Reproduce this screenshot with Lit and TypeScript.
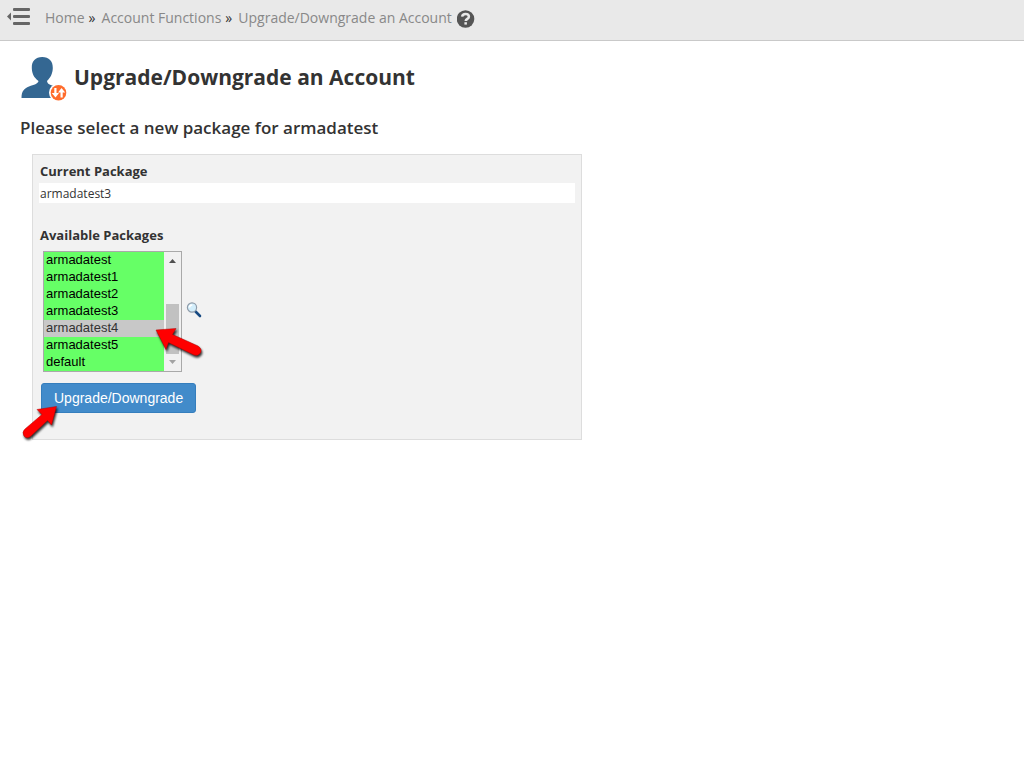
import { LitElement, html, css } from "lit";
import { customElement, state } from "lit/decorators.js";

@customElement("app-root")
export class AppRoot extends LitElement {
  static styles = css`
    :host {
      display: block;
      font-family: "Open Sans", sans-serif;
      font-size: 13px;
      line-height: 20px;
      color: #333;
    }
    * {
      box-sizing: border-box;
    }
    svg {
      display: block;
      flex: none;
    }
    .topbar {
      display: flex;
      align-items: center;
      height: 41px;
      padding: 0 7px 5px;
      background: #e9e9e9;
      border-bottom: 1px solid #c9c9c9;
    }
    .icon-button {
      padding: 0 0 3px;
      border: 0;
      background: none;
      cursor: pointer;
    }
    .crumbs {
      display: flex;
      align-items: center;
      gap: 5px;
      margin-left: 15px;
      font-size: 14px;
    }
    .crumbs a {
      color: #888;
      text-decoration: none;
    }
    .sep {
      margin-right: 1px;
      margin-left: -1px;
    }
    main {
      padding: 14px 20px;
    }
    .heading {
      display: flex;
      align-items: center;
      gap: 6px;
    }
    h1 {
      margin: 0 0 4px;
      font-size: 21px;
      line-height: 28px;
      font-weight: 700;
    }
    h2 {
      margin: 16px 0;
      font-size: 17px;
      line-height: 20px;
      font-weight: 600;
    }
    .panel {
      max-width: 550px;
      margin-left: 12px;
      padding: 6px 6px 26px;
      background: #f2f2f2;
      border: 1px solid #ddd;
    }
    .label {
      display: block;
      padding: 0 1px;
      font-size: 13px;
      font-weight: 700;
    }
    .current {
      margin: 2px 0 22px;
      padding: 2px 1px 0;
      font-size: 12px;
      line-height: 18px;
      background: #fff;
    }
    .picker {
      display: flex;
      align-items: center;
      gap: 4px;
      margin: 6px 0 11px 4px;
    }
    .listbox {
      position: relative;
      display: flex;
      border: 1px solid #a9a9a9;
    }
    select {
      width: 120px;
      height: 119px;
      padding: 0;
      border: 0;
      border-radius: 0;
      outline: 0;
      overflow: hidden;
      background: #6f6;
      font: 13px/17px "Liberation Sans", Arial, sans-serif;
      color: #000;
    }
    option {
      height: 17px;
      min-height: 17px;
      padding: 0 2px;
      line-height: 15px;
    }
    option:checked {
      background: #c8c8c8 linear-gradient(#c8c8c8, #c8c8c8);
      color: #333;
    }
    .submit {
      position: relative;
      display: flex;
      width: max-content;
      margin-left: 2px;
    }
    .primary {
      height: 30px;
      padding: 0 12px;
      border: 1px solid #357ebd;
      border-radius: 3px;
      background: #428bca;
      color: #fff;
      font: 14px/20px "Liberation Sans", Arial, sans-serif;
      cursor: pointer;
    }
    .pointer {
      position: absolute;
      pointer-events: none;
      filter: drop-shadow(1px 2px 1px rgba(0, 0, 0, 0.8));
    }
    .to-option {
      left: 111px;
      top: 75px;
    }
    .to-submit {
      left: -20px;
      top: 21px;
    }
  `;

  @state() private selected = "armadatest4";

  private packages = [
    "armadatest",
    "armadatest1",
    "armadatest2",
    "armadatest3",
    "armadatest4",
    "armadatest5",
    "default",
  ];

  private pick(e: Event) {
    this.selected = (e.target as HTMLSelectElement).value;
  }

  render() {
    return html`
      <header class="topbar">
        <button class="icon-button" aria-label="Collapse menu">
          <svg width="23" height="18" viewBox="0 0 23 18" fill="#666">
            <path d="M0 9.500L4 5.500V13.500Z" />
            <rect x="6" y="1" width="17" height="3" rx="1" />
            <rect x="6" y="8" width="17" height="3" rx="1" />
            <rect x="6" y="15" width="17" height="3" rx="1" />
          </svg>
        </button>
        <nav class="crumbs" aria-label="Breadcrumb">
          <a href="#">Home</a><span class="sep">»</span>
          <a href="#">Account Functions</a><span class="sep">»</span>
          <a href="#">Upgrade/Downgrade an Account</a>
          <a href="#" aria-label="Help">
            <svg width="18" height="20" viewBox="0 -2 18 20">
              <circle cx="8.500" cy="9" r="8.8" fill="#555" />
              <path
                d="M5.1 6.6C5.4 4.9 6.7 4 8.5 4C10.5 4 11.9 5.1 11.9 6.7C11.9 8.8 8.7 8.9 8.7 11"
                fill="none"
                stroke="#e9e9e9"
                stroke-width="2.5"
              />
              <rect x="7.4" y="12.2" width="2.5" height="2.4" fill="#e9e9e9" />
            </svg>
          </a>
        </nav>
      </header>
      <main>
        <div class="heading">
          <svg width="48" height="47" viewBox="0 0 48 47">
            <path
              d="M1.500 43C1.600 36 4 33.500 9 31.500C14 29.500 18 29 18.500 26C14 22.500 12 19 11.800 13C11.600 6 15.500 2 22.200 2C29 2 33 6 32.800 13C32.600 19 30.500 22.500 27 26C27.500 29 30 30 34 31L34 43Z"
              fill="#346792"
            />
            <circle cx="38.500" cy="37.800" r="9.500" fill="#fff" />
            <circle cx="38.500" cy="37.800" r="7.800" fill="#ff6c2c" />
            <path
              d="M34.300 33H36.500V38H39L35.500 42.500L31.800 38H34.300ZM40.500 42.500H42.700V37.500H45.200L41.500 33L38 37.500H40.500Z"
              fill="#fff"
            />
          </svg>
          <h1>Upgrade/Downgrade an Account</h1>
        </div>
        <h2>Please select a new package for armadatest</h2>
        <form class="panel" @submit=${(e: Event) => e.preventDefault()}>
          <span class="label">Current Package</span>
          <div class="current">armadatest3</div>
          <label class="label" for="packages">Available Packages</label>
          <div class="picker">
            <div class="listbox">
              <select id="packages" size="7" @change=${this.pick}>
                ${this.packages.map(
                  (name) => html`<option value=${name} ?selected=${name === this.selected}>${name}</option>`
                )}
              </select>
              <svg width="17" height="119" viewBox="0 0 17 119" aria-hidden="true">
                <rect width="17" height="119" fill="#f1f1f1" />
                <rect x="2" y="52" width="13" height="50" fill="#c1c1c1" />
                <path d="M5 11L8.500 7L12 11Z" fill="#505050" />
                <path d="M5 108L8.500 112L12 108Z" fill="#a3a3a3" />
              </svg>
              <svg class="pointer to-option" width="48" height="31" viewBox="0 0 48 31">
                <path
                  d="M1 3L21 1.500L17.500 7.500L43 19Q47.500 22 45.500 26Q43 29.500 39 28L13.500 15.500L11 22.500Z"
                  fill="#f00"
                  stroke="#b00000"
                  stroke-width="0.5"
                />
              </svg>
            </div>
            <button class="icon-button" type="button" aria-label="View package">
              <svg width="16" height="16" viewBox="0 0 16 16">
                <path d="M9.500 9.500L14 14" stroke="#174a82" stroke-width="2.600" stroke-linecap="round" />
                <circle cx="6" cy="5.500" r="4.600" fill="#d3eefb" stroke="#8f9caa" stroke-width="1.200" />
                <path d="M3.500 5.500C3.500 3.800 4.800 3 6.300 3" fill="none" stroke="#fff" stroke-width="1.600" />
              </svg>
            </button>
          </div>
          <div class="submit">
            <button class="primary" type="submit">Upgrade/Downgrade</button>
            <svg class="pointer to-submit" width="38" height="37" viewBox="0 0 38 37">
              <path
                d="M35.500 2.500L30.500 21L26.500 16.500L10 32Q6 35.500 3 32Q0.500 28 4 25L21 10.500L16 5.500Z"
                fill="#f00"
                stroke="#b00000"
                stroke-width="0.5"
              />
            </svg>
          </div>
        </form>
      </main>
    `;
  }
}
